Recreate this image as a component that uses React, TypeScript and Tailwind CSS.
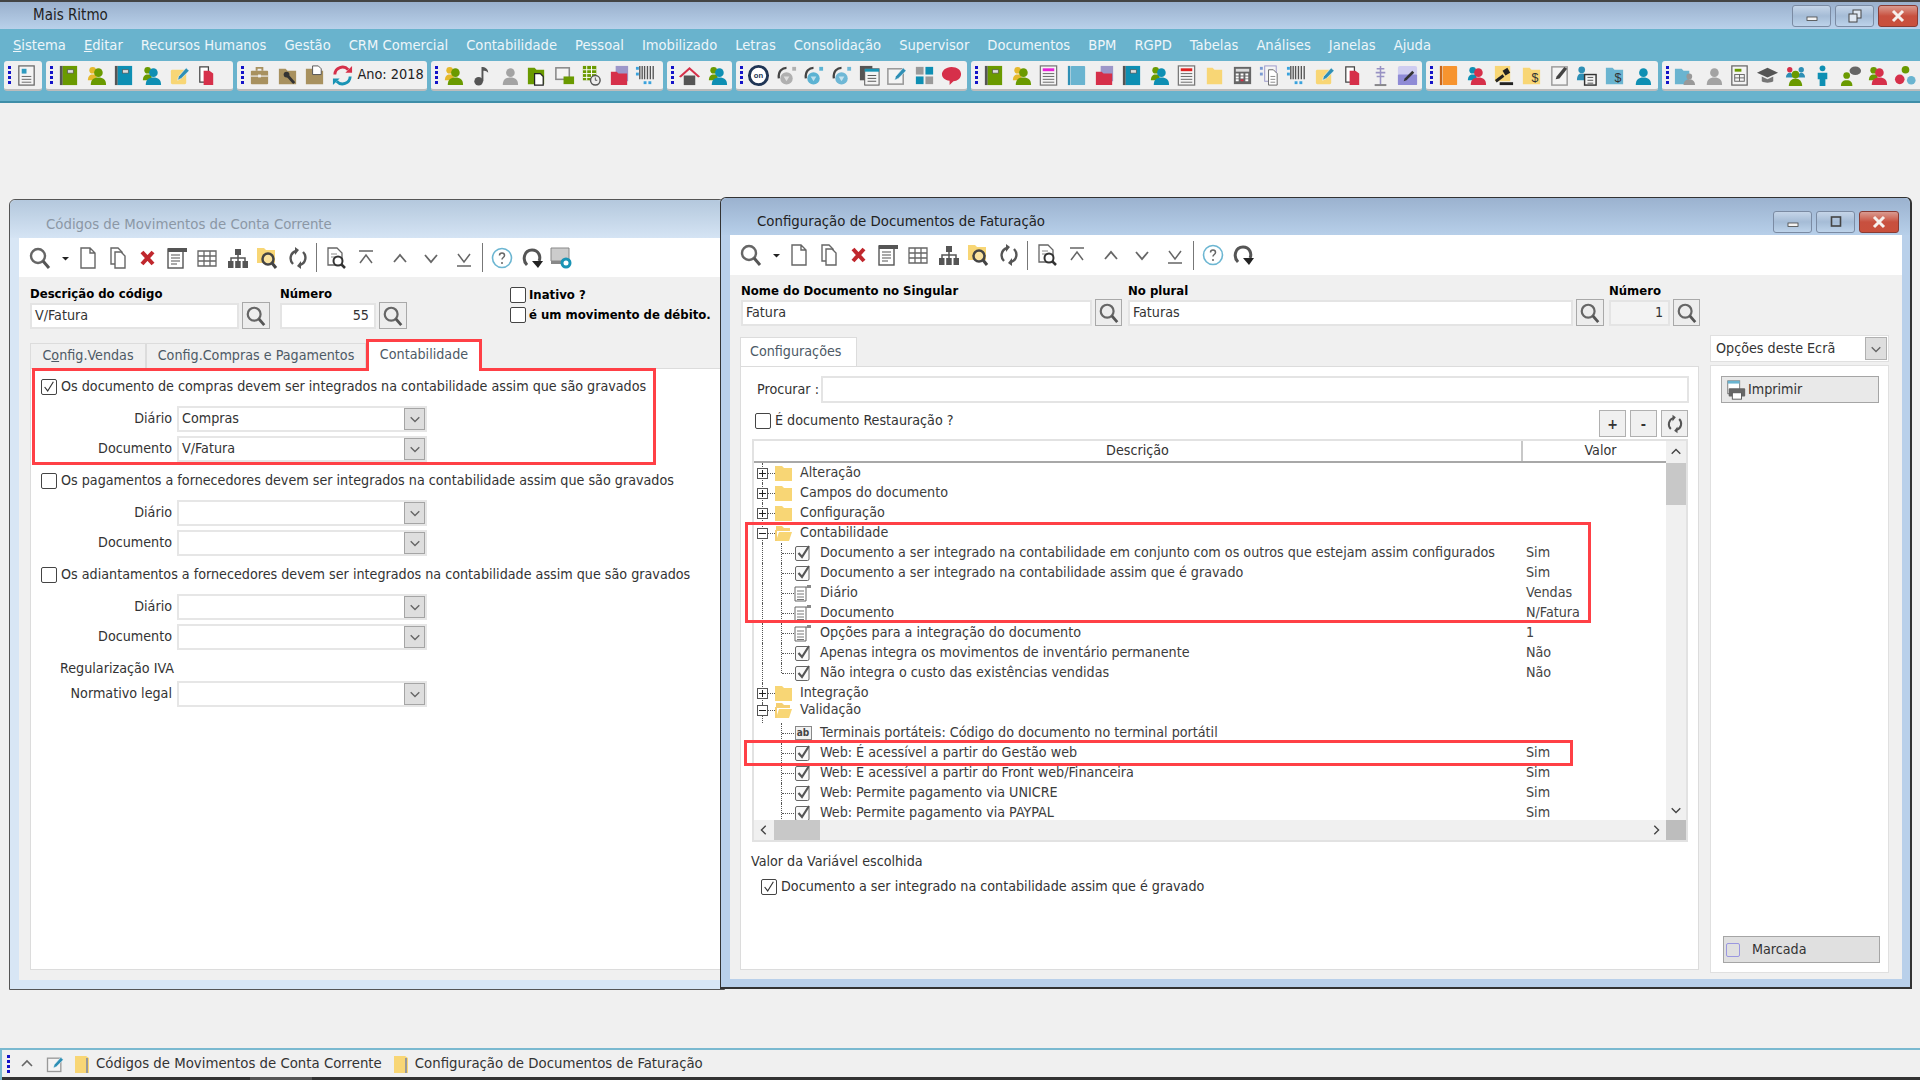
import React from "react";

const person = (c: string, b?: string) => (
  <>
    {b && (
      <>
        <circle cx="8" cy="6.5" r="3.5" fill={b} />
        <path d="M3 17c0-4 2-6 5-6h4v6z" fill={b} />
      </>
    )}
    <circle cx="14" cy="9" r="4.5" fill={c} />
    <path d="M6 22c0-6 3-8 8-8s8 2 8 8z" fill={c} />
  </>
);

const book = (c: string) => (
  <>
    <rect x="3" y="2" width="3" height="20" fill="#555" />
    <rect x="6" y="2" width="15" height="20" fill={c} />
    <rect x="11" y="6" width="6" height="3.5" fill="#ddd" stroke="#555" strokeWidth=".7" />
  </>
);

const sheet = (c: string) => (
  <>
    <rect x="3.5" y="2" width="17" height="20" fill="#f4f4f4" stroke="#777" strokeWidth="1.3" />
    <rect x="6" y="4.5" width="12" height="3" fill={c} />
    <path d="M6 10h12M6 13h12M6 16h12M6 19h12" stroke="#666" />
  </>
);

const folder = (c: string) => <path d="M3 5h7l2 2h9v14H3z" fill={c} />;

const pencil = (c: string) => (
  <path d="M10 17l1-4 8-9 3 3-8 8z" fill={c} stroke="#fff" strokeWidth=".6" />
);

const note = (
  <>
    <rect x="3" y="6" width="16" height="15" rx="1.5" fill="#f8d675" />
    {pencil("#2e8fb5")}
  </>
);

const pdf = (
  <>
    <path d="M5 3h9v16H5z" fill="#fff" stroke="#444" strokeWidth="1.3" />
    <path d="M9 7h6l4 3v12H9z" fill="#d6304a" />
  </>
);

const redFolder = (
  <>
    <rect x="8" y="2" width="13" height="16" fill="#9d97c9" />
    <path d="M3 8h6l2 2h9v12H3z" fill="#d6304a" />
  </>
);

const barcode = (
  <>
    <path d="M5 2v14M7.5 2v14M10 2v14M13 2v14M16 2v14M19 2v14" stroke="#555" strokeWidth="1.4" />
    <rect x="1" y="3" width="3" height="3" fill="#3aa2dd" />
    <rect x="1" y="9" width="3" height="3" fill="#3aa2dd" />
    <rect x="9" y="18" width="3" height="3" fill="#3aa2dd" />
    <rect x="14" y="18" width="3" height="3" fill="#3aa2dd" />
  </>
);

const headset = (c: string) => (
  <>
    <path d="M4 15c-1-8 4-11 8-11" fill="none" stroke="#444" strokeWidth="2.4" />
    <circle cx="12" cy="15" r="6.5" fill={c} />
    <path d="M9 13l3 5 3-5z" fill="#fff" opacity=".6" />
    <rect x="18" y="3" width="4" height="4" fill={c} />
  </>
);

const dollarFolder = (c: string) => (
  <>
    <path d="M3 4h7l2 2h9v15H3z" fill={c} />
    <text x="12" y="19" fontSize="13" fontFamily="Liberation Sans" fill="#333">
      $
    </text>
  </>
);

const ICONS: Record<string, React.ReactNode> = {
  report: (
    <>
      <rect x="4" y="2" width="16" height="20" fill="#f4f4f4" stroke="#666" strokeWidth="1.3" />
      <rect x="7" y="5" width="5" height="5" fill="#2e9bc0" />
      <path d="M7 13h10M7 16h10M7 19h10" stroke="#666" />
    </>
  ),
  bookGreen: book("#6a9a00"),
  bookTeal: book("#0e8fb3"),
  bookBlue: (
    <>
      <rect x="3" y="2" width="2.5" height="20" fill="#2e8fb5" />
      <rect x="6" y="2" width="15" height="20" rx="1" fill="#6ab4d0" />
    </>
  ),
  bookOrange: (
    <>
      <rect x="3" y="2" width="2.5" height="20" fill="#c8661a" />
      <rect x="6" y="2" width="15" height="20" rx="1" fill="#f7942f" />
    </>
  ),
  personGreen: person("#6a9a00", "#e5b92c"),
  personTeal: person("#0e8fb3", "#6a9a00"),
  personGray: person("#a3a3a3"),
  personRed: person("#d6304a", "#0e8fb3"),
  personBlue: person("#0e8fb3"),
  personRedGreen: person("#d6304a", "#6a9a00"),
  note,
  pdf,
  briefcase: (
    <>
      <path d="M9 7V4h6v3" fill="none" stroke="#a8915f" strokeWidth="2" />
      <rect x="3" y="7" width="18" height="14" rx="1" fill="#a8915f" />
      <rect x="3" y="12" width="18" height="1.2" fill="#f0f0f0" />
      <rect x="10.5" y="11" width="3" height="3" fill="#f0f0f0" />
    </>
  ),
  folderTool: (
    <>
      {folder("#a8915f")}
      <path d="M11 11l8 9" stroke="#333" strokeWidth="3" />
      <circle cx="11" cy="11" r="3" fill="#333" />
    </>
  ),
  folderDoc: (
    <>
      {folder("#a8915f")}
      <path d="M10 2h6l3 3v6h-9z" fill="#fff" stroke="#555" />
    </>
  ),
  sync: (
    <>
      <path d="M4 11a8 8 0 0 1 14-5" fill="none" stroke="#d6304a" strokeWidth="3" />
      <path d="M15 9l7 0 0-7z" fill="#d6304a" />
      <path d="M20 13a8 8 0 0 1-14 5" fill="none" stroke="#1a94b5" strokeWidth="3" />
      <path d="M9 15l-7 0 0 7z" fill="#1a94b5" />
    </>
  ),
  music: (
    <>
      <circle cx="9" cy="18" r="4.5" fill="#555" />
      <path d="M12 18V3c4 0 7 2 7 6-2-2-4-2-5-2v11z" fill="#555" />
    </>
  ),
  greenDoc: (
    <>
      <path d="M3 4h7l2 2h8v15H3z" fill="#6a9a00" />
      <path d="M10 10h6l3 3v9h-9z" fill="#fff" stroke="#222" strokeWidth="1.3" />
    </>
  ),
  screens: (
    <>
      <rect x="3" y="4" width="14" height="12" fill="#f4f4f4" stroke="#888" strokeWidth="1.6" />
      <rect x="11" y="13" width="11" height="8" fill="#6a9a00" />
    </>
  ),
  calendarClock: (
    <>
      <rect x="3" y="2" width="14" height="15" fill="#6a9a00" />
      <path d="M3 6h14M3 10h14M3 14h14M7 2v15M12 2v15" stroke="#fff" />
      <circle cx="16" cy="17" r="5" fill="#eee" stroke="#555" strokeWidth="1.5" />
      <path d="M16 14v3h2" stroke="#555" fill="none" />
    </>
  ),
  redFolder,
  barcode,
  home: (
    <>
      <path d="M6 12h12v10H6z" fill="#555" />
      <path d="M1 13L12 3l11 10-2 1-9-8-9 8z" fill="#d6304a" />
    </>
  ),
  on: (
    <>
      <circle cx="12" cy="12" r="9.5" fill="#fff" stroke="#1f3555" strokeWidth="3" />
      <text x="12" y="15" fontSize="8" textAnchor="middle" fontWeight="700" fontFamily="Liberation Sans" fill="#1f3555">
        on
      </text>
    </>
  ),
  headGray: headset("#b0b0b0"),
  headBlue: headset("#5cb3d3"),
  headBlue2: headset("#6fb8d6"),
  docTeal: (
    <>
      <rect x="2" y="2" width="13" height="15" fill="#555" />
      <rect x="7" y="5" width="15" height="17" fill="#f4f4f4" stroke="#555" />
      <rect x="7" y="5" width="15" height="3" fill="#1a94b5" />
      <path d="M10 12h9M10 15h9M10 18h9" stroke="#555" />
    </>
  ),
  noteEdit: (
    <>
      <rect x="3" y="5" width="16" height="16" fill="#f4f4f4" stroke="#999" strokeWidth="1.6" />
      {pencil("#2e8fb5")}
    </>
  ),
  tiles: (
    <>
      <rect x="3" y="3" width="8" height="8" fill="#9a9a9a" />
      <rect x="13" y="3" width="8" height="8" fill="#0e8fb3" />
      <rect x="3" y="13" width="8" height="8" fill="#0e8fb3" />
      <rect x="13" y="13" width="8" height="8" fill="#9a9a9a" />
    </>
  ),
  chat: <path d="M12 3c6 0 10 3 10 7.500s-4 7.500-8 7.500l-4 4v-4.500C5 17 2 14 2 10.500S6 3 12 3z" fill="#d6304a" />,
  sheetPink: sheet("#e81fd8"),
  sheetRed: sheet("#e02020"),
  folderYellow: <path d="M4 4h6l2 2h8v15H4z" fill="#f8d675" />,
  calc: (
    <>
      <rect x="3" y="3" width="18" height="18" fill="#666" />
      <rect x="5" y="5" width="14" height="3" fill="#ddd" />
      <path d="M5 11h3M10 11h3M15 11h3M5 14h3M10 14h3M15 14h3M5 17h3M15 17h3" stroke="#fff" strokeWidth="2" />
      <path d="M10 17h3" stroke="#d6304a" strokeWidth="2" />
    </>
  ),
  docsBlue: (
    <>
      <rect x="7" y="2" width="12" height="16" fill="#f4f4f4" stroke="#9a97c9" />
      <path d="M11 6h5l4 4v12h-9z" fill="#fff" stroke="#666" />
      <rect x="2" y="3" width="3" height="3" fill="#7a9ad3" />
      <rect x="2" y="9" width="3" height="3" fill="#7a9ad3" />
      <path d="M13 13h5M13 16h5M13 19h5" stroke="#888" />
    </>
  ),
  antenna: (
    <>
      <path d="M12 2v19M8 5h8M7 9h10M8 13h8M6 22h12" stroke="#9892c4" strokeWidth="1.6" />
      <path d="M6 22h12" stroke="#888" strokeWidth="2" />
    </>
  ),
  purpleEdit: (
    <>
      <rect x="2" y="2" width="20" height="20" rx="2" fill="#cfcdf0" />
      <rect x="2" y="11" width="20" height="11" rx="1" fill="#8f8bd6" />
      <path d="M8 18l1-3 8-8 2 2-8 8z" fill="#333" />
    </>
  ),
  gavel: (
    <>
      <rect x="3" y="2" width="16" height="16" fill="#f8d675" />
      <path d="M4 18l8-6" stroke="#222" strokeWidth="3" />
      <path d="M11 7l5-3 3 5-5 3z" fill="#222" />
      <rect x="8" y="19" width="14" height="3" fill="#222" />
    </>
  ),
  folderDollar: dollarFolder("#f8d675"),
  folderDollarBlue: dollarFolder("#6ab4d0"),
  docPen: (
    <>
      <rect x="4" y="3" width="16" height="19" fill="#f4f4f4" stroke="#999" strokeWidth="1.5" />
      <path d="M8 16l1-3 8-10 3 2-8 10z" fill="#444" />
    </>
  ),
  personCalc: (
    <>
      <circle cx="7" cy="6" r="3.5" fill="#2e8fb5" />
      <path d="M2 17c0-5 2-7 5-7s5 2 5 7z" fill="#2e8fb5" />
      <rect x="10" y="11" width="12" height="11" fill="#f4f4f4" stroke="#333" strokeWidth="1.5" />
      <path d="M13 14h6M13 17h6M13 20h6" stroke="#555" />
    </>
  ),
  folderPerson: (
    <>
      <path d="M2 5h7l2 2h6v14H2z" fill="#6ab4d0" />
      <circle cx="17" cy="13" r="3" fill="#999" />
      <path d="M11 22c0-4 3-6 6-6s6 2 6 6z" fill="#999" />
    </>
  ),
  formGreen: (
    <>
      <rect x="4" y="2" width="16" height="20" fill="#f4f4f4" stroke="#666" strokeWidth="1.3" />
      <rect x="7" y="5" width="7" height="3" fill="#6a9a00" />
      <rect x="7" y="11" width="10" height="7" fill="none" stroke="#666" />
      <path d="M12 11v7M7 14.500h10" stroke="#666" />
    </>
  ),
  cap: (
    <>
      <path d="M1 9l11-5 11 5-11 5z" fill="#555" />
      <path d="M6 13v5c3 2 9 2 12 0v-5l-6 3z" fill="#777" />
    </>
  ),
  group: (
    <>
      <circle cx="6" cy="6" r="2.8" fill="#d6304a" />
      <circle cx="18" cy="6" r="2.800" fill="#2e8fb5" />
      <path d="M2 14c0-3 2-5 4-5s3 2 3 5zM15 14c0-3 1-5 3-5s4 2 4 5z" fill="#2e8fb5" />
      <circle cx="12" cy="11" r="4" fill="#6a9a00" />
      <path d="M5 23c0-5 3-8 7-8s7 3 7 8z" fill="#6a9a00" />
    </>
  ),
  standing: (
    <>
      <circle cx="12" cy="4.500" r="3" fill="#0e8fb3" />
      <path d="M7 9h10v7h-2v7h-6v-7H7z" fill="#0e8fb3" />
    </>
  ),
  personChat: (
    <>
      <circle cx="8" cy="12" r="3.500" fill="#6a9a00" />
      <path d="M2 23c0-4 2-6 6-6s6 2 6 6z" fill="#6a9a00" />
      <ellipse cx="17" cy="7" rx="6" ry="4.500" fill="#666" />
    </>
  ),
  network: (
    <>
      <circle cx="12" cy="6" r="4" fill="#6a9a00" />
      <circle cx="6" cy="16" r="5" fill="#d6304a" />
      <circle cx="18" cy="17" r="4.500" fill="#6ab4d0" />
    </>
  ),
};

const Icon = ({ name }: { name: string }) => (
  <svg viewBox="0 0 24 24" className="w-[23px] h-[23px]">
    {ICONS[name]}
  </svg>
);

const Grip = ({ className = "" }: { className?: string }) => (
  <div className={`flex flex-col gap-[2px] w-[3px] ${className}`}>
    <span className="h-[3px] bg-[#1414c8]" />
    <span className="h-[3px] bg-[#1414c8]" />
    <span className="h-[3px] bg-[#1414c8]" />
    <span className="h-[3px] bg-[#1414c8]" />
  </div>
);

const Cell = ({ name }: { name: string }) => (
  <div className="w-[27.6px] flex justify-center shrink-0">
    <Icon name={name} />
  </div>
);

const ToolGroup = ({ icons, className = "", children }: { icons: string[]; className?: string; children?: React.ReactNode }) => (
  <div className={`flex items-center h-[30px] pl-[4px] bg-[#f0f0f0] rounded-[3px] border-b-2 border-[#bcbcbc] shrink-0 ${className}`}>
    <Grip className="mr-[2px]" />
    <div className="flex items-center">
      {icons.map((n, i) => (
        <Cell key={i} name={n} />
      ))}
      {children}
    </div>
  </div>
);

const Chevron = ({ dir = "down", className = "w-[12px] h-[12px]", color = "#666" }: { dir?: "up" | "down" | "left" | "right"; className?: string; color?: string }) => {
  const d = { up: "M2 9l5-5 5 5", down: "M2 5l5 5 5-5", left: "M9 2L4 7l5 5", right: "M5 2l5 5-5 5" }[dir];
  return (
    <svg viewBox="0 0 14 14" className={className} fill="none" stroke={color} strokeWidth="1.6">
      <path d={d} />
    </svg>
  );
};

const WinButton = ({ kind, w = "w-[39px]" }: { kind: "min" | "max" | "restore" | "close"; w?: string }) => (
  <div
    className={`${w} h-[22px] rounded-[3px] border flex items-center justify-center ${
      kind === "close"
        ? "border-[#8a3b33] bg-gradient-to-b from-[#d99a90] via-[#c8503f] to-[#c9503c]"
        : "border-[#7b8ba3] bg-gradient-to-b from-[#c5d5e8] via-[#a5bcd6] to-[#bdd3ea]"
    }`}
  >
    <svg viewBox="0 0 16 16" className="w-[16px] h-[16px]">
      {kind === "min" && <rect x="3" y="9" width="10" height="3.500" fill="#f3f3f3" stroke="#444" strokeWidth=".8" />}
      {kind === "max" && <rect x="3.500" y="3" width="9" height="9" fill="none" stroke="#444" strokeWidth="1.600" />}
      {kind === "restore" && (
        <>
          <rect x="6" y="2" width="8" height="8" fill="#dfe8f2" stroke="#444" />
          <rect x="2" y="6" width="8" height="8" fill="#dfe8f2" stroke="#444" />
        </>
      )}
      {kind === "close" && <path d="M3 3l10 10M13 3L3 13" stroke="#f6f1ee" strokeWidth="3" />}
    </svg>
  </div>
);

const Magnifier = ({ size = "w-[22px] h-[22px]" }: { size?: string }) => (
  <svg viewBox="0 0 24 24" className={size} fill="none">
    <circle cx="10" cy="10" r="7" stroke="#666" strokeWidth="2.400" />
    <path d="M15 15l6 7" stroke="#555" strokeWidth="3" />
  </svg>
);

const TOOL_STROKE = "#666";

const TOOLS: Record<string, React.ReactNode> = {
  mag: (
    <>
      <circle cx="10" cy="10" r="7" fill="none" stroke="#666" strokeWidth="2.400" />
      <path d="M15 15l6 7" stroke="#555" strokeWidth="3" />
    </>
  ),
  drop: <path d="M9 11h7l-3.500 3.500z" fill="#222" />,
  newDoc: <path d="M5 2h9l5 5v15H5zM14 2v5h5" fill="#fff" stroke={TOOL_STROKE} strokeWidth="1.400" />,
  copy: (
    <>
      <path d="M5 2h7l4 4v12H5z" fill="#fff" stroke={TOOL_STROKE} strokeWidth="1.400" />
      <path d="M9 6h6l4 4v12H9z" fill="#fff" stroke={TOOL_STROKE} strokeWidth="1.400" />
    </>
  ),
  del: <path d="M6 6l11 12M17 6L6 18" stroke="#c0272d" strokeWidth="4" />,
  form: (
    <>
      <rect x="3" y="3" width="15" height="19" fill="#fff" stroke="#555" strokeWidth="1.400" />
      <rect x="3" y="2" width="19" height="4" fill="#555" />
      <path d="M6 9h9M6 12h9M6 15h9M6 18h6" stroke="#555" strokeWidth="1.200" />
    </>
  ),
  table: <path d="M3 5h18v15H3zM3 10h18M3 15h18M9 5v15M15 5v15" fill="#fff" stroke={TOOL_STROKE} strokeWidth="1.300" />,
  tree: (
    <>
      <rect x="9" y="3" width="6" height="6" fill="#555" />
      <rect x="2" y="15" width="5.500" height="7" fill="#555" />
      <rect x="9.200" y="15" width="5.500" height="7" fill="#555" />
      <rect x="16.500" y="15" width="5.500" height="7" fill="#555" />
      <path d="M12 9v6M5 15v-3h14v3" fill="none" stroke="#555" strokeWidth="1.500" />
    </>
  ),
  folderSearch: (
    <>
      <path d="M1 2h7l2 2h9v13H1z" fill="#f8d675" />
      <circle cx="12" cy="13" r="5.500" fill="#fff" fillOpacity=".3" stroke="#444" strokeWidth="2.500" />
      <path d="M16 17l4 5" stroke="#444" strokeWidth="3" />
    </>
  ),
  refresh: (
    <>
      <path d="M7 18C3 14 4 7 10 5" fill="none" stroke="#555" strokeWidth="2.400" />
      <path d="M9 1v8l4-5z" fill="#555" />
      <path d="M17 6c4 4 3 11-3 13" fill="none" stroke="#555" strokeWidth="2.400" />
      <path d="M15 23v-8l-4 5z" fill="#555" />
    </>
  ),
  docSearch: (
    <>
      <path d="M4 2h9l5 5v12H4z" fill="#fff" stroke={TOOL_STROKE} strokeWidth="1.300" />
      <path d="M7 8h6M7 11h6" stroke="#888" />
      <circle cx="14" cy="15" r="4.500" fill="#fff" stroke="#333" strokeWidth="2" />
      <path d="M17 18l4 4" stroke="#333" strokeWidth="2.500" />
    </>
  ),
  first: <path d="M5 5h14M6 17l6-8 6 8" fill="none" stroke={TOOL_STROKE} strokeWidth="1.500" />,
  up: <path d="M6 16l6-7 6 7" fill="none" stroke={TOOL_STROKE} strokeWidth="1.800" />,
  down: <path d="M6 9l6 7 6-7" fill="none" stroke={TOOL_STROKE} strokeWidth="1.800" />,
  last: <path d="M5 20h14M6 8l6 8 6-8" fill="none" stroke={TOOL_STROKE} strokeWidth="1.500" />,
  help: (
    <>
      <circle cx="12" cy="12" r="9.500" fill="#fff" stroke="#6cb6d2" strokeWidth="1.600" />
      <path d="M9.500 9.500a2.500 2.500 0 0 1 5 0c0 2-2.500 2-2.500 4" fill="none" stroke="#666" strokeWidth="1.500" />
      <circle cx="12" cy="17" r="1" fill="#666" />
    </>
  ),
  reload: (
    <>
      <path d="M7 19C2 14 4 4 12 4c7 0 9 7 7 11" fill="none" stroke="#555" strokeWidth="3" />
      <path d="M12 15h11l-5 7z" fill="#222" />
    </>
  ),
  monitor: (
    <>
      <path d="M2 2h18v13H2z" fill="#ccc" stroke="#888" />
      <path d="M2 15h12v3H2z" fill="#888" />
      <circle cx="17" cy="17" r="4" fill="#fff" stroke="#1a94b5" strokeWidth="3" />
    </>
  ),
};

const ToolIcon = ({ name, className = "" }: { name: string; className?: string }) => (
  <svg viewBox="0 0 24 24" className={`h-[24px] w-[24px] shrink-0 ${className}`}>
    {TOOLS[name]}
  </svg>
);

const WinToolbar = ({ monitor, height }: { monitor?: boolean; height: string }) => (
  <div className={`${height} bg-white flex items-center pl-[9px] shrink-0`}>
    <ToolIcon name="mag" />
    <ToolIcon name="drop" className="ml-[1px]" />
    <ToolIcon name="newDoc" className="ml-[-1px]" />
    <ToolIcon name="copy" className="ml-[6px]" />
    <ToolIcon name="del" className="ml-[6px]" />
    <ToolIcon name="form" className="ml-[5px]" />
    <ToolIcon name="table" className="ml-[6px]" />
    <ToolIcon name="tree" className="ml-[7px]" />
    <ToolIcon name="folderSearch" className="ml-[6px]" />
    <ToolIcon name="refresh" className="ml-[6px]" />
    <div className="w-[1px] h-[29px] bg-[#777] ml-[6px] mr-[7px]" />
    <ToolIcon name="docSearch" />
    <ToolIcon name="first" className="ml-[6px]" />
    <ToolIcon name="up" className="ml-[10px]" />
    <ToolIcon name="down" className="ml-[7px]" />
    <ToolIcon name="last" className="ml-[9px]" />
    <div className="w-[1px] h-[29px] bg-[#777] ml-[6px] mr-[7px]" />
    <ToolIcon name="help" />
    <ToolIcon name="reload" className="ml-[6px]" />
    {monitor && <ToolIcon name="monitor" className="ml-[5px]" />}
  </div>
);

const Check = ({ checked, className = "" }: { checked?: boolean; className?: string }) => (
  <div className={`w-[16px] h-[16px] shrink-0 bg-white border border-[#444] rounded-[2px] flex items-center justify-center ${className}`}>
    {checked && (
      <svg viewBox="0 0 16 16" className="w-[14px] h-[14px]" fill="none" stroke="#333" strokeWidth="1.300">
        <path d="M3 8l3.500 4.500L13 2" />
      </svg>
    )}
  </div>
);

const SearchBtn = ({ w = "w-[28px]" }: { w?: string }) => (
  <div className={`${w} h-[27px] ml-[3px] bg-[#ededed] border border-[#a9a9a9] flex items-center justify-center shrink-0`}>
    <Magnifier />
  </div>
);

const Input = ({ value, className = "", right }: { value?: string; className?: string; right?: boolean }) => (
  <div className={`h-[26px] bg-white border-2 border-[#e4e4e4] flex items-center pb-[2px] px-[3px] text-[#333] ${right ? "justify-end pr-[5px]" : ""} ${className}`}>
    {value}
  </div>
);

const Select = ({ label, value, className = "" }: { label: string; value?: string; className?: string }) => (
  <div className={`flex items-center ${className}`}>
    <span className="w-[141px] text-right mr-[5px] pb-[2px] text-[#333]">{label}</span>
    <div className="w-[250px] h-[26px] bg-white border-2 border-[#e6e6e6] flex items-center pl-[3px] text-[#333]">
      <span className="pb-[2px]">{value}</span>
      <div className="ml-auto w-[21px] h-[22px] bg-[#dedede] border border-[#a5a5a5] flex items-center justify-center">
        <Chevron />
      </div>
    </div>
  </div>
);

const CheckLine = ({ checked, text, className = "" }: { checked?: boolean; text: string; className?: string }) => (
  <div className={`flex items-center h-[18px] pl-[10px] text-[#333] ${className}`}>
    <Check checked={checked} className="mr-[4px]" />
    <span className="pb-[2px] whitespace-nowrap">{text}</span>
  </div>
);

const RedBox = ({ className }: { className: string }) => (
  <div className={`absolute border-[3px] border-[#ff4046] pointer-events-none ${className}`} />
);

const TreeFolder = ({ open }: { open?: boolean }) => (
  <svg viewBox="0 0 17 18" className="w-[17px] h-[18px] shrink-0">
    {open ? (
      <>
        <path d="M1 2h6l2 2h6v3H1z" fill="#f5cf72" />
        <path d="M1 17L4 8h13l-3 9z" fill="#f8d675" />
        <path d="M1 6v11" stroke="#f5cf72" strokeWidth="2" />
      </>
    ) : (
      <path d="M0 2h7l2 2h8v13H0z" fill="#f8d675" />
    )}
  </svg>
);

const Expander = ({ open }: { open?: boolean }) => (
  <div className="w-[11px] h-[11px] bg-white border border-[#555] flex items-center justify-center relative shrink-0 z-10">
    <span className="absolute w-[7px] h-[1px] bg-[#222]" />
    {!open && <span className="absolute w-[1px] h-[7px] bg-[#222]" />}
  </div>
);

const ChildIcon = ({ kind }: { kind: string }) => {
  if (kind === "ab")
    return (
      <div className="w-[17px] h-[14px] border border-[#888] text-[10px] leading-[12px] text-center font-bold text-[#444] bg-[#f2f2f2] shrink-0">ab</div>
    );
  if (kind === "list")
    return (
      <svg viewBox="0 0 18 18" className="w-[18px] h-[18px] shrink-0" fill="none">
        <path d="M1 3h15v1M1 3v14h11V3" stroke="#666" />
        <path d="M3 7h7M3 10h7M3 13h7M3 15.500h7" stroke="#777" />
        <rect x="13" y="1" width="4" height="3" fill="#888" />
      </svg>
    );
  return (
    <svg viewBox="0 0 18 18" className="w-[18px] h-[18px] shrink-0" fill="none">
      <rect x="1.500" y="2.500" width="13.500" height="14" rx="1.500" stroke="#666" fill="#f8f8f8" />
      <path d="M4.500 9l3.500 4L15 2" stroke="#555" strokeWidth="2.200" />
    </svg>
  );
};

type Row = { text: string; value?: string; folder?: boolean; open?: boolean; kind?: string; branch?: "mid" | "last"; className?: string };

const ROWS: Row[] = [
  { text: "Alteração", folder: true },
  { text: "Campos do documento", folder: true },
  { text: "Configuração", folder: true },
  { text: "Contabilidade", folder: true, open: true },
  { text: "Documento a ser integrado na contabilidade em conjunto com os outros que estejam assim configurados", value: "Sim", kind: "check", branch: "mid" },
  { text: "Documento a ser integrado na contabilidade assim que é gravado", value: "Sim", kind: "check", branch: "mid" },
  { text: "Diário", value: "Vendas", kind: "list", branch: "mid" },
  { text: "Documento", value: "N/Fatura", kind: "list", branch: "mid" },
  { text: "Opções para a integração do documento", value: "1", kind: "list", branch: "mid" },
  { text: "Apenas integra os movimentos de inventário permanente", value: "Não", kind: "check", branch: "mid" },
  { text: "Não integra o custo das existências vendidas", value: "Não", kind: "check", branch: "last" },
  { text: "Integração", folder: true },
  { text: "Validação", folder: true, open: true, className: "pb-[6px]" },
  { text: "Terminais portáteis: Código do documento no terminal portátil", kind: "ab", branch: "mid" },
  { text: "Web: É acessível a partir do Gestão web", value: "Sim", kind: "check", branch: "mid" },
  { text: "Web: E acessível a partir do Front web/Financeira", value: "Sim", kind: "check", branch: "mid" },
  { text: "Web: Permite pagamento via UNICRE", value: "Sim", kind: "check", branch: "mid" },
  { text: "Web: Permite pagamento via PAYPAL", value: "Sim", kind: "check", branch: "mid" },
];

const TreeRow = ({ row, index }: { row: Row; index: number }) => (
  <div className={`relative flex items-center h-[20px] shrink-0 text-[#3c3c3c] ${row.className ?? ""}`}>
    {index <= 12 && <span className="absolute left-[8px] top-0 bottom-0 border-l border-dotted border-[#555]" />}
    {row.branch && (
      <span className={`absolute left-[27px] top-0 border-l border-dotted border-[#555] ${row.branch === "last" ? "h-[10px]" : "bottom-0"}`} />
    )}
    <div className="w-[766px] flex items-center shrink-0 whitespace-nowrap">
      {row.folder ? (
        <>
          <div className="ml-[3px]">
            <Expander open={row.open} />
          </div>
          <span className="w-[7px] border-t border-dotted border-[#555]" />
          <TreeFolder open={row.open} />
          <span className="ml-[8px] pb-[2px]">{row.text}</span>
        </>
      ) : (
        <>
          <span className="ml-[28px] w-[12px] border-t border-dotted border-[#555]" />
          <div className="w-[18px] flex justify-center">
            <ChildIcon kind={row.kind ?? "check"} />
          </div>
          <span className="ml-[8px] pb-[2px]">{row.text}</span>
        </>
      )}
    </div>
    <span className="pl-[6px] pb-[2px] whitespace-nowrap text-[#444]">{row.value}</span>
  </div>
);

const BoldLabel = ({ children }: { children: React.ReactNode }) => (
  <div className="h-[17px] font-bold text-[13px] leading-[17px] text-black whitespace-nowrap">{children}</div>
);

const LeftWindow = () => (
  <div className="absolute left-[9px] top-[96px] w-[716px] h-[791px] rounded-t-[6px] border border-[#555] bg-[#d8e6f5] flex flex-col">
    <div className="h-[38px] flex items-center pl-[36px] pt-[10px] rounded-t-[6px] bg-gradient-to-b from-[#b4c8dd] to-[#d5e4f4] text-[#8b97a5] text-[14.8px] shrink-0">
      Códigos de Movimentos de Conta Corrente
    </div>
    <div className="flex-1 flex flex-col pl-[9px] pb-[9px] min-h-0">
      <WinToolbar monitor height="h-[39px]" />
      <div className="flex-1 flex flex-col bg-[#f0f0f0] min-h-0">
        <div className="flex pl-[11px] pt-[8px]">
          <div>
            <BoldLabel>Descrição do código</BoldLabel>
            <div className="flex items-end">
              <Input value="V/Fatura" className="w-[209px] h-[25px]" />
              <SearchBtn />
            </div>
          </div>
          <div className="ml-[10px]">
            <BoldLabel>Número</BoldLabel>
            <div className="flex items-end">
              <Input value="55" right className="w-[96px] h-[25px]" />
              <SearchBtn />
            </div>
          </div>
          <div className="ml-[103px] font-bold text-[13px] text-black flex flex-col gap-[4px] pt-[2px] whitespace-nowrap">
            <div className="flex items-center gap-[3px] h-[16px]">
              <Check />
              Inativo ?
            </div>
            <div className="flex items-center gap-[3px] h-[16px]">
              <Check />é um movimento de débito.
            </div>
          </div>
        </div>
        <div className="flex items-end h-[29px] mt-[10px] pl-[11px] text-[#4d5a66]">
          <div className="w-[116px] h-[25px] pb-[2px] flex items-center justify-center bg-[#f0f0f0] border border-b-0 border-[#dcdcdc]">
            <span>
              C<span className="underline">o</span>nfig.Vendas
            </span>
          </div>
          <div className="w-[220px] h-[25px] pb-[2px] flex items-center justify-center bg-[#f0f0f0] border border-b-0 border-[#dcdcdc]">Config.Compras e Pagamentos</div>
          <div className="relative z-10 w-[116px] h-[32px] -mb-[3px] pb-[5px] flex items-center justify-center bg-white border-[3px] border-b-0 border-[#ff4046]">Contabilidade</div>
        </div>
        <div className="relative flex-1 ml-[11px] mb-[10px] bg-white border border-[#dcdcdc] flex flex-col">
          <RedBox className="left-[1px] top-[-1px] w-[624px] h-[97px]" />
          <CheckLine checked className="mt-[9px]" text="Os documento de compras devem ser integrados na contabilidade assim que são gravados" />
          <Select label="Diário" value="Compras" className="mt-[10px]" />
          <Select label="Documento" value="V/Fatura" className="mt-[4px]" />
          <CheckLine className="mt-[10px]" text="Os pagamentos a fornecedores devem ser integrados na contabilidade assim que são gravados" />
          <Select label="Diário" className="mt-[10px]" />
          <Select label="Documento" className="mt-[4px]" />
          <CheckLine className="mt-[10px]" text="Os adiantamentos a fornecedores devem ser integrados na contabilidade assim que são gravados" />
          <Select label="Diário" className="mt-[10px]" />
          <Select label="Documento" className="mt-[4px]" />
          <div className="mt-[9px] h-[18px] pl-[29px] text-[#333]">Regularização IVA</div>
          <Select label="Normativo legal" className="mt-[4px]" />
        </div>
      </div>
    </div>
  </div>
);

const SmallBtn = ({ children }: { children: React.ReactNode }) => (
  <div className="w-[27px] h-[27px] bg-[#f0f0f0] border border-[#b0b0b0] flex items-center justify-center text-[#333] font-bold">{children}</div>
);

const RightWindow = () => (
  <div className="absolute left-[720px] top-[94px] w-[1192px] h-[792px] rounded-t-[6px] border border-[#333] border-r-2 border-b-2 bg-[#b9d0ea] flex flex-col">
    <div className="h-[37px] flex items-center justify-between pl-[36px] pr-[11px] rounded-t-[6px] bg-gradient-to-b from-[#9bb2cf] to-[#b7cfe9] text-[#222] text-[14.8px] shrink-0">
      <span className="pt-[8px]">Configuração de Documentos de Faturação</span>
      <div className="flex gap-[4px] pt-[10px]">
        <WinButton kind="min" />
        <WinButton kind="max" />
        <WinButton kind="close" w="w-[40px]" />
      </div>
    </div>
    <div className="flex-1 flex flex-col pl-[9px] pr-[8px] pb-[8px] min-h-0">
      <WinToolbar height="h-[40px]" />
      <div className="flex-1 bg-[#f0f0f0] flex flex-col min-h-0">
        <div className="flex pl-[11px] pt-[7px] text-[#222]">
          <div>
            <BoldLabel>Nome do Documento no Singular</BoldLabel>
            <div className="flex items-end">
              <Input value="Fatura" className="w-[351px]" />
              <SearchBtn w="w-[27px]" />
            </div>
          </div>
          <div className="ml-[6px]">
            <BoldLabel>No plural</BoldLabel>
            <div className="flex items-end">
              <Input value="Faturas" className="w-[445px]" />
              <SearchBtn />
            </div>
          </div>
          <div className="ml-[5px]">
            <BoldLabel>Número</BoldLabel>
            <div className="flex items-end">
              <Input value="1" right className="w-[61px] !bg-[#f3f3f3]" />
              <SearchBtn w="w-[27px]" />
            </div>
          </div>
        </div>
        <div className="flex items-start pl-[10px]">
          <div className="w-[959px] mt-[11px]">
            <div className="w-[117px] h-[29px] pb-[2px] bg-white border border-b-0 border-[#dcdcdc] flex items-center pl-[9px] text-[#4d5a66]">Configurações</div>
            <div className="relative h-[604px] bg-white border border-[#dcdcdc]">
              <div className="flex items-center mt-[9px] pl-[16px] text-[#333]">
                <span className="w-[64px] pb-[2px]">Procurar :</span>
                <div className="w-[868px] h-[27px] bg-white border-2 border-[#e4e4e4]" />
              </div>
              <div className="flex items-center justify-between h-[27px] mt-[7px] pl-[14px] pr-[10px] text-[#333]">
                <div className="flex items-center gap-[4px] -mt-[5px]">
                  <Check />
                  <span className="pb-[2px]">É documento Restauração ?</span>
                </div>
                <div className="flex gap-[4px]">
                  <SmallBtn>+</SmallBtn>
                  <SmallBtn>-</SmallBtn>
                  <SmallBtn>
                    <svg viewBox="0 0 24 24" className="w-[20px] h-[20px]">
                      {TOOLS.refresh}
                    </svg>
                  </SmallBtn>
                </div>
              </div>
              <div className="ml-[11px] mt-[2px] w-[936px] h-[403px] border-2 border-[#e2e2e2] flex flex-col">
                <div className="flex flex-1 min-h-0">
                  <div className="flex-1 flex flex-col min-w-0 overflow-hidden">
                    <div className="flex h-[22px] shrink-0 border-b-2 border-[#a8a8a8] text-[#333]">
                      <div className="w-[769px] border-r-2 border-[#c8c8c8] pb-[2px] flex items-center justify-center">Descrição</div>
                      <div className="flex-1 flex items-center justify-center pl-[12px] pb-[2px]">Valor</div>
                    </div>
                    {ROWS.map((r, i) => (
                      <TreeRow key={i} row={r} index={i} />
                    ))}
                  </div>
                  <div className="w-[20px] bg-[#f0f0f0] flex flex-col shrink-0">
                    <div className="h-[22px] flex items-center justify-center">
                      <Chevron dir="up" color="#444" />
                    </div>
                    <div className="h-[42px] bg-[#c8c8c8]" />
                    <div className="flex-1" />
                    <div className="h-[20px] flex items-center justify-center">
                      <Chevron dir="down" color="#444" />
                    </div>
                  </div>
                </div>
                <div className="flex h-[20px] bg-[#f0f0f0] shrink-0">
                  <div className="w-[20px] flex items-center justify-center">
                    <Chevron dir="left" color="#444" />
                  </div>
                  <div className="w-[46px] bg-[#c8c8c8]" />
                  <div className="flex-1" />
                  <div className="w-[20px] flex items-center justify-center">
                    <Chevron dir="right" color="#444" />
                  </div>
                  <div className="w-[20px] bg-[#bdbdbd]" />
                </div>
              </div>
              <div className="mt-[10px] ml-[10px] h-[18px] text-[#333]">Valor da Variável escolhida</div>
              <div className="mt-[8px] ml-[20px] flex items-center gap-[4px] h-[18px] text-[#333]">
                <Check checked />
                <span className="pb-[2px]">Documento a ser integrado na contabilidade assim que é gravado</span>
              </div>
              <RedBox className="left-[4px] top-[155px] w-[846px] h-[101px]" />
              <RedBox className="left-[3px] top-[373px] w-[829px] h-[26px]" />
            </div>
          </div>
          <div className="ml-[11px] w-[179px] mt-[9px]">
            <div className="h-[27px] bg-white border border-[#e0e0e0] flex items-center justify-between pl-[5px] pr-[1px] text-[#333]">
              <span className="pb-[2px]">Opções deste Ecrã</span>
              <div className="w-[22px] h-[23px] bg-[#dedede] border border-[#b0b0b0] flex items-center justify-center">
                <Chevron />
              </div>
            </div>
            <div className="mt-[3px] h-[608px] bg-white border border-[#e0e0e0] flex flex-col text-[#333]">
              <div className="mt-[10px] ml-[10px] w-[158px] h-[27px] bg-[#e9e9e9] border border-[#a5a5a5] flex items-center pl-[3px] gap-[1px]">
                <svg viewBox="0 0 24 24" className="w-[22px] h-[22px]">
                  <rect x="3" y="2" width="13" height="14" fill="#fff" stroke="#777" />
                  <rect x="3" y="2" width="13" height="3" fill="#6ab4d0" />
                  <rect x="4" y="10" width="18" height="9" rx="1" fill="#666" />
                  <rect x="8" y="15" width="10" height="7" fill="#fff" stroke="#555" />
                </svg>
                <span className="pb-[2px]">Imprimir</span>
              </div>
              <div className="mt-auto mb-[9px] ml-[12px] w-[157px] h-[27px] bg-[#e0e0e0] border border-[#a5a5a5] flex items-center pl-[2px]">
                <div className="w-[14px] h-[14px] rounded-[2px] border border-[#9a97e0]" />
                <span className="ml-[12px] pb-[2px]">Marcada</span>
              </div>
            </div>
          </div>
        </div>
      </div>
    </div>
  </div>
);

const MENU = ["Sistema", "Editar", "Recursos Humanos", "Gestão", "CRM Comercial", "Contabilidade", "Pessoal", "Imobilizado", "Letras", "Consolidação", "Supervisor", "Documentos", "BPM", "RGPD", "Tabelas", "Análises", "Janelas", "Ajuda"];
const UNDERLINED = ["Sistema", "Editar", "Janelas"];

export default function App() {
  return (
    <div className="relative w-[1920px] h-[1080px] overflow-hidden flex flex-col bg-[#f0f0f0] text-[14.2px] leading-[18px]" style={{ fontFamily: '"DejaVu Sans Condensed", "Liberation Sans", sans-serif' }}>
      <div className="h-[29px] shrink-0 border-t-2 border-[#444] bg-gradient-to-b from-[#9ab0cd] to-[#b9d1ea] flex items-center justify-between pl-[33px] pr-[2px] text-[15px] text-[#222]">
        <span className="pb-[2px]">Mais Ritmo</span>
        <div className="flex gap-[4px]">
          <WinButton kind="min" />
          <WinButton kind="restore" />
          <WinButton kind="close" w="w-[40px]" />
        </div>
      </div>
      <div className="h-[74px] shrink-0 bg-[#69b3cd] border-b-2 border-[#3f8ea8]">
        <div className="h-[32px] flex items-center pl-[13px] gap-[18px] text-[14.6px] text-[#eef6fa]">
          {MENU.map((m) =>
            UNDERLINED.includes(m) ? (
              <span key={m}>
                <span className="underline">{m[0]}</span>
                {m.slice(1)}
              </span>
            ) : (
              <span key={m}>{m}</span>
            ),
          )}
        </div>
        <div className="flex items-start pl-[4px] gap-[4px]">
          <ToolGroup className="w-[38px]" icons={["report"]} />
          <ToolGroup className="w-[187px]" icons={["bookGreen", "personGreen", "bookTeal", "personTeal", "note", "pdf"]} />
          <ToolGroup className="w-[190px]" icons={["briefcase", "folderTool", "folderDoc", "sync"]}>
            <span className="text-[#222] text-[14.4px] ml-[1px] pb-[2px] whitespace-nowrap">Ano: 2018</span>
          </ToolGroup>
          <ToolGroup className="w-[232px]" icons={["personGreen", "music", "personGray", "greenDoc", "screens", "calendarClock", "redFolder", "barcode"]} />
          <ToolGroup className="w-[65px]" icons={["home", "personTeal"]} />
          <ToolGroup className="w-[231px]" icons={["on", "headGray", "headBlue", "headBlue2", "docTeal", "noteEdit", "tiles", "chat"]} />
          <ToolGroup className="w-[451px]" icons={["bookGreen", "personGreen", "sheetPink", "bookBlue", "redFolder", "bookTeal", "personTeal", "sheetRed", "folderYellow", "calc", "docsBlue", "barcode", "note", "pdf", "antenna", "purpleEdit"]} />
          <ToolGroup className="w-[232px]" icons={["bookOrange", "personRed", "gavel", "folderDollar", "docPen", "personCalc", "folderDollarBlue", "personBlue"]} />
          <ToolGroup className="w-[260px]" icons={["folderPerson", "personGray", "formGreen", "cap", "group", "standing", "personChat", "personRedGreen", "network"]} />
        </div>
      </div>
      <div className="relative flex-1">
        <LeftWindow />
        <RightWindow />
      </div>
      <div className="h-[32px] shrink-0 border-t-2 border-l-2 border-[#7ab9d0] flex flex-col">
        <div className="flex-1 flex items-center pl-[5px] text-[#333] text-[14.8px]">
          <Grip />
          <Chevron dir="up" className="w-[14px] h-[14px] ml-[10px]" />
          <svg viewBox="0 0 24 24" className="w-[20px] h-[20px] ml-[11px]">
            {ICONS.noteEdit}
          </svg>
          <svg viewBox="0 0 16 20" className="w-[16px] h-[20px] ml-[9px]">
            <path d="M1 2h11l3 2v15H1z" fill="#f8d675" />
            <path d="M13 4v15" stroke="#999" strokeWidth="2" />
          </svg>
          <span className="ml-[6px] pb-[2px] whitespace-nowrap">Códigos de Movimentos de Conta Corrente</span>
          <svg viewBox="0 0 16 20" className="w-[16px] h-[20px] ml-[11px]">
            <path d="M1 2h11l3 2v15H1z" fill="#f8d675" />
            <path d="M13 4v15" stroke="#999" strokeWidth="2" />
          </svg>
          <span className="ml-[6px] pb-[2px] whitespace-nowrap">Configuração de Documentos de Faturação</span>
        </div>
        <div className="h-[3px] bg-[#333] flex">
          <span className="ml-[248px] w-[62px] bg-[#555]" />
        </div>
      </div>
    </div>
  );
}
